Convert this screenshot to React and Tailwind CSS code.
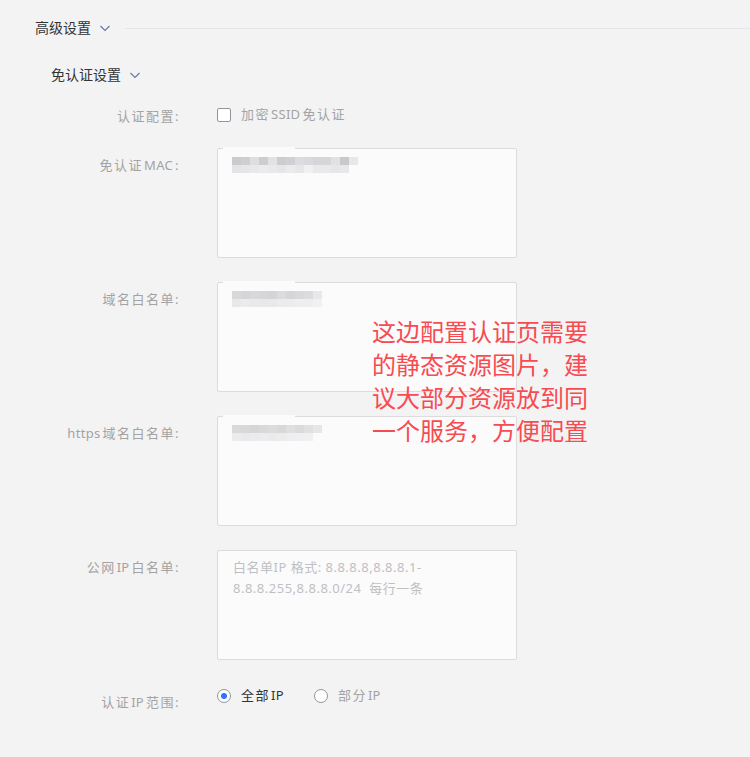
import React from "react";

const font = { fontFamily: '"Noto Sans", "Noto Sans CJK SC", sans-serif' };

const blurRows = {
  mac: [
    ["#cbcacd", "#cfced2", "#dedde0", "#cdccd0", "#e3e1e3", "#cdccd1", "#d0cfd4", "#dcdbdf", "#d9d8dc", "#d8d5d7", "#d6d6da", "#e2e1e2", "#c9c8cc", "#e8e8ec"],
    ["#e4e3e5", "#e6e5e7", "#e8e7e9", "#ebeaec", "#e9e8ea", "#e6e5e8", "#eceaeb", "#e7e6e9", "#f1f0f0", "#eae9ea", "#e9e8ea", "#e6e6e8", "#e8e7e9"],
  ],
  domain: [
    ["#d8d7da", "#d5d4d7", "#d8d7da", "#d6d5d8", "#d4d3d6", "#dbdadc", "#d6d5d9", "#d9d8db", "#dcdbdd", "#e8e8ea"],
    ["#e8e7e9", "#ebeaec", "#e9e8ea", "#e8e7ea", "#e9e8eb", "#ebeaec", "#ecebed", "#eeedef", "#eeedef", "#f1f1f2"],
  ],
  https: [
    ["#d9d8da", "#d8d7da", "#d6d5d8", "#d9d8db", "#dcdbdd", "#d8d7da", "#dfdee0", "#dadadc", "#e0dfe1", "#e6e6e8"],
    ["#ebeaec", "#e9e8ea", "#ebeaec", "#ecebed", "#eae9eb", "#edeced", "#eeedef", "#efeef0", "#f1f0f1"],
  ],
};

// CJK gets a little tracking, latin runs stay tight with a small gap around them
function Mixed({ text }) {
  return text.split(/([A-Za-z]+)/).map((part, i) =>
    /^[A-Za-z]+$/.test(part) ? (
      <span key={i} className="tracking-[0.3px] ml-[1px] mr-[2px]">{part}</span>
    ) : (
      <span key={i}>{part}</span>
    )
  );
}

function Chevron() {
  return (
    <svg width="12" height="12" viewBox="0 0 12 12" className="ml-[8px]">
      <path d="M1.5 4 L6 8.5 L10.5 4" fill="none" stroke="#6a7aa3" strokeWidth="1.2" />
    </svg>
  );
}

function Blur({ rows }) {
  return (
    <div className="absolute left-[14px] top-[8px] flex flex-col">
      {rows.map((r, i) => (
        <div key={i} className="flex h-[8px]">
          {r.map((c, j) => (
            <div key={j} className="w-[9px] h-[8px]" style={{ background: c }} />
          ))}
        </div>
      ))}
    </div>
  );
}

function Row({ label, children, labelClass = "pt-[7px]" }) {
  return (
    <div className="flex items-start">
      <div className={`w-[180px] shrink-0 text-right text-[13px] leading-[20px] tracking-[1.5px] text-[#a3a3a3] ${labelClass}`}>
        <Mixed text={label} />
      </div>
      <div className="ml-[37px]">{children}</div>
    </div>
  );
}

function Box({ rows, placeholder }) {
  return (
    <div className="relative w-[300px] h-[110px] bg-[#fbfbfb] border border-[#dcdcdc] rounded-[2px]">
      {rows && (
        <>
          <div className="absolute left-[5px] -top-[2px] w-[72px] h-[22px] bg-[#fbfbfb]" />
          <Blur rows={rows} />
        </>
      )}
      {placeholder && (
        <div className="px-[15px] pt-[6px] text-[13px] leading-[21px] tracking-[0.5px] text-[#c0c0c4]">
          {placeholder.map((l) => (
            <div key={l} className="whitespace-pre">{l}</div>
          ))}
        </div>
      )}
    </div>
  );
}

export default function App() {
  return (
    <div className="relative min-h-screen bg-[#f3f3f3] text-[#333]" style={font}>
      <div className="flex items-center pl-[35px] pt-[18px] h-[38px]">
        <span className="text-[14px] leading-[20px] text-[#333]">高级设置</span>
        <Chevron />
        <div className="flex-1 ml-[14px] h-px bg-[#e4e6eb]" />
      </div>

      <div className="flex items-center pl-[51px] mt-[27px] h-[20px]">
        <span className="text-[14px] leading-[20px] text-[#333]">免认证设置</span>
        <Chevron />
      </div>

      <div className="flex flex-col mt-[20px]">
        <Row label="认证配置:" labelClass="pt-[1px]">
          <label className="flex items-center h-[20px]">
            <span className="w-[14px] h-[14px] border border-[#8f959e] rounded-[2px] bg-white" />
            <span className="ml-[10px] text-[13px] tracking-[1.5px] text-[#a3a3a3]">
              <Mixed text="加密SSID免认证" />
            </span>
          </label>
        </Row>

        <div className="flex flex-col gap-[24px] mt-[22px]">
          <Row label="免认证MAC:">
            <Box rows={blurRows.mac} />
          </Row>
          <Row label="域名白名单:">
            <Box rows={blurRows.domain} />
          </Row>
          <Row label="https域名白名单:">
            <Box rows={blurRows.https} />
          </Row>
          <Row label="公网IP白名单:">
            <Box placeholder={["白名单IP 格式: 8.8.8.8,8.8.8.1-", "8.8.8.255,8.8.8.0/24  每行一条"]} />
          </Row>
        </div>

        <div className="mt-[26px]">
          <Row label="认证IP范围:" labelClass="pt-[6px]">
            <div className="flex items-center h-[20px] text-[13px] tracking-[1.5px]">
              <span className="flex items-center justify-center w-[14px] h-[14px] rounded-full border border-[#8f959e] bg-white">
                <span className="w-[6px] h-[6px] rounded-full bg-[#3370ff]" />
              </span>
              <span className="ml-[10px] text-[#333]"><Mixed text="全部IP" /></span>
              <span className="ml-[28px] w-[14px] h-[14px] rounded-full border border-[#8f959e] bg-white" />
              <span className="ml-[10px] text-[#a3a3a3]"><Mixed text="部分IP" /></span>
            </div>
          </Row>
        </div>
      </div>

      <div className="absolute left-[372px] top-[315px] text-[24px] leading-[33px] text-[#f74b52] pointer-events-none">
        <div>这边配置认证页需要</div>
        <div>的静态资源图片，建</div>
        <div>议大部分资源放到同</div>
        <div>一个服务，方便配置</div>
      </div>
    </div>
  );
}
